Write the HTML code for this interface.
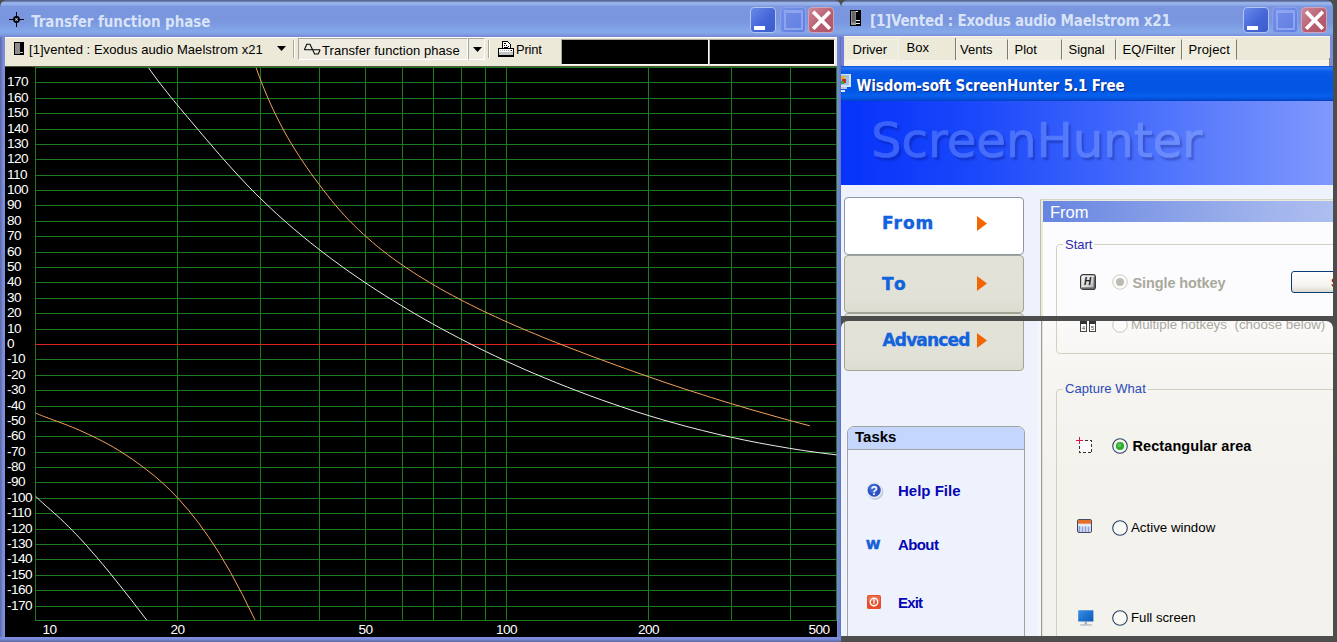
<!DOCTYPE html>
<html><head><meta charset="utf-8"><title>Transfer function phase</title>
<style>
html,body{margin:0;padding:0}
body{width:1337px;height:642px;overflow:hidden;position:relative;background:#4d4d4d;font-family:"Liberation Sans",Arial,sans-serif;font-size:13px;color:#000}
div,span,svg{position:absolute;box-sizing:border-box}
.t{white-space:pre;line-height:1}
/* XP inactive title bar */
.tb{background:linear-gradient(#56648e 0,#62729e 1.3px,#94aee6 2.2px,#9ab4ea 3px,#92aee8 4.5px,#7c98e0 6.5px,#7a96df 8px,#7a96df 22px,#81a4e6 29px,#83a8e8 32px,#80a0e4 34px,#7a8cd8 36px,#7888d4 37px)}
.tt{font-family:"DejaVu Sans Condensed","DejaVu Sans",sans-serif;font-weight:bold;font-size:15px;color:#d9e3f8}
.btn{width:26px;height:26px;top:6.5px;border:1px solid #b4c4f0;border-radius:4px}
.bmin{background:linear-gradient(135deg,#6a8aea 0,#4466d8 55%,#3a5ccc 100%)}
.bmax{background:linear-gradient(135deg,#7690ea 0,#5e7ee0 100%);border-color:#8aa0ea}
.bcls{background:linear-gradient(135deg,#cc8896 0,#b85c70 60%,#b05468 100%);border-color:#d0a4b8}
.tool{background:#ece9d8}
</style></head><body>

<!-- ================= LEFT WINDOW ================= -->
<div class="tb" style="left:0;top:0;width:841px;height:37px;border-radius:7px 7px 0 0"></div>
<svg style="left:9px;top:12px" width="16" height="16" viewBox="0 0 16 16"><path d="M7.5 0v15M0 7.5h15" stroke="#000" stroke-width="1" fill="none" shape-rendering="crispEdges"/><circle cx="7.5" cy="7.5" r="2.6" fill="none" stroke="#000" stroke-width="1.6"/><circle cx="7.5" cy="7.5" r="1" fill="#cfd8f0"/></svg>
<span class="t tt" style="left:31.3px;top:15.2px;letter-spacing:-.07px">Transfer function phase</span>
<div class="btn bmin" style="left:750px"><div style="left:3px;top:18px;width:11px;height:4px;background:#fff"></div></div>
<div class="btn bmax" style="left:779.5px"><div style="left:3px;top:2.5px;width:19px;height:19.5px;border:2px solid #8ea4ee;border-top-width:3px"></div></div>
<div class="btn bcls" style="left:808px"><svg style="left:0;top:0" width="24" height="24" viewBox="0 0 24 24"><path d="M4.2 3.8L20.8 20.8M20.8 3.8L4.2 20.8" stroke="#fff" stroke-width="3.7" fill="none"/></svg></div>

<div style="left:0;top:37px;width:5px;height:605px;background:linear-gradient(90deg,#5e6aa8 0,#6a78bc 1.5px,#7c8cdc 3px,#7e8ede 5px)"></div>
<div style="left:837px;top:37px;width:4px;height:605px;background:linear-gradient(90deg,#7a8ad8 0,#6c7cc8 3px,#5c6cae 4px)"></div>
<div style="left:0;top:637px;width:841px;height:5px;background:linear-gradient(#7e8ede 0,#7c8cdc 2px,#6a78bc 3.5px,#5e6aa8 5px)"></div>

<!-- toolbar -->
<div class="tool" style="left:5px;top:37px;width:832px;height:29px;border-top:1px solid #fff"></div>
<svg style="left:14px;top:42px" width="10" height="13" viewBox="0 0 10 13" shape-rendering="crispEdges"><rect x="0" y="0" width="10" height="13" fill="#000"/><rect x="1" y="1" width="5" height="11" fill="#8c8c8c"/><rect x="6" y="10" width="3" height="1" fill="#c8c8c8"/></svg>
<span class="t" style="left:29px;top:43px;letter-spacing:.05px">[1]vented : Exodus audio Maelstrom x21</span>
<svg style="left:277px;top:46px" width="9" height="5" viewBox="0 0 9 5"><path d="M0 0h9L4.5 5z" fill="#000"/></svg>
<div style="left:293px;top:40px;width:2px;height:18px;border-left:1px solid #aca899;border-right:1px solid #fff"></div>
<div style="left:298px;top:38px;width:170px;height:22px;background:#efede1;border:1px solid;border-color:#aca899 #fff #fff #aca899"></div>
<div style="left:468px;top:38px;width:17px;height:22px;background:#efede1;border:1px solid;border-color:#aca899 #fff #fff #aca899"></div>
<svg style="left:304px;top:43px" width="17" height="13" viewBox="0 0 17 13"><path d="M0.3 6.8H16.2M0.3 6.8L2.8 1.3H6L10.6 11H14.2L16.2 6.8" fill="none" stroke="#000" stroke-width="1.05"/></svg>
<span class="t" style="left:322px;top:44px;letter-spacing:.07px">Transfer function phase</span>
<svg style="left:473px;top:47px" width="9" height="5" viewBox="0 0 9 5"><path d="M0 0h9L4.5 5z" fill="#000"/></svg>
<div style="left:488px;top:40px;width:2px;height:18px;border-left:1px solid #aca899;border-right:1px solid #fff"></div>
<svg style="left:498px;top:41px" width="16" height="16" viewBox="0 0 16 16" shape-rendering="crispEdges"><path d="M4.5 8V0.5H9.5L12.5 3.5V8" fill="#fff" stroke="#000"/><path d="M6 2.5h2M6 4.5h1M8 4.5h1M6 6.5h4M10 5.5h1" stroke="#000"/><rect x="0.5" y="7.5" width="15" height="7" fill="#c4c4c4" stroke="#000"/><rect x="1" y="8" width="14" height="3" fill="#fff"/><path d="M2 9.5h1M4 9.5h1M6 9.5h1M8 9.5h1M10 9.5h1M12 9.5h1" stroke="#aaa"/><rect x="13" y="9" width="1" height="1" fill="#000"/><rect x="0" y="14" width="16" height="1.6" fill="#000"/></svg>
<span class="t" style="left:516px;top:43px;letter-spacing:-.2px">Print</span>
<div style="left:561px;top:39px;width:148px;height:26px;background:#000;border:1px solid;border-color:#aca899 #fff #fff #aca899"></div>
<div style="left:709px;top:39px;width:126px;height:26px;background:#000;border:1px solid;border-color:#aca899 #fff #fff #aca899"></div>

<!-- plot -->
<div style="left:5px;top:66px;width:832px;height:571px;background:#000">
<svg class="plot" width="832" height="571" viewBox="5 66 832 571">
<rect x="5" y="66" width="832" height="571" fill="#000"/><rect x="5" y="66" width="832" height="1" fill="#50583c"/>
<g fill="#1e7a1e" shape-rendering="crispEdges"><rect x="35" y="606" width="802" height="1"/><rect x="35" y="590" width="802" height="1"/><rect x="35" y="575" width="802" height="1"/><rect x="35" y="559" width="802" height="1"/><rect x="35" y="544" width="802" height="1"/><rect x="35" y="529" width="802" height="1"/><rect x="35" y="513" width="802" height="1"/><rect x="35" y="498" width="802" height="1"/><rect x="35" y="482" width="802" height="1"/><rect x="35" y="467" width="802" height="1"/><rect x="35" y="452" width="802" height="1"/><rect x="35" y="436" width="802" height="1"/><rect x="35" y="421" width="802" height="1"/><rect x="35" y="406" width="802" height="1"/><rect x="35" y="390" width="802" height="1"/><rect x="35" y="375" width="802" height="1"/><rect x="35" y="359" width="802" height="1"/><rect x="35" y="329" width="802" height="1"/><rect x="35" y="313" width="802" height="1"/><rect x="35" y="298" width="802" height="1"/><rect x="35" y="282" width="802" height="1"/><rect x="35" y="267" width="802" height="1"/><rect x="35" y="252" width="802" height="1"/><rect x="35" y="236" width="802" height="1"/><rect x="35" y="221" width="802" height="1"/><rect x="35" y="205" width="802" height="1"/><rect x="35" y="190" width="802" height="1"/><rect x="35" y="175" width="802" height="1"/><rect x="35" y="159" width="802" height="1"/><rect x="35" y="144" width="802" height="1"/><rect x="35" y="129" width="802" height="1"/><rect x="35" y="113" width="802" height="1"/><rect x="35" y="98" width="802" height="1"/><rect x="35" y="82" width="802" height="1"/><rect x="35" y="67" width="1" height="553"/><rect x="177" y="67" width="1" height="553"/><rect x="260" y="67" width="1" height="553"/><rect x="319" y="67" width="1" height="553"/><rect x="365" y="67" width="1" height="553"/><rect x="402" y="67" width="1" height="553"/><rect x="433" y="67" width="1" height="553"/><rect x="461" y="67" width="1" height="553"/><rect x="485" y="67" width="1" height="553"/><rect x="506" y="67" width="1" height="553"/><rect x="648" y="67" width="1" height="553"/><rect x="731" y="67" width="1" height="553"/><rect x="790" y="67" width="1" height="553"/><rect x="836" y="67" width="1" height="553"/><rect x="35" y="67" width="802" height="1"/><rect x="35" y="620" width="802" height="1"/></g>
<rect x="35" y="344" width="802" height="1" fill="#dc221a" shape-rendering="crispEdges"/>
<path d="M148.6,67.8 L151.5,71.9 L154.5,76.0 L157.5,80.1 L160.6,84.1 L163.8,88.2 L167.0,92.2 L170.2,96.3 L173.6,100.4 L177.0,104.6 L180.4,108.7 L184.0,113.0 L187.6,117.2 L191.3,121.6 L195.0,126.0 L198.8,130.5 L202.7,135.1 L206.7,139.8 L210.8,144.5 L214.9,149.4 L219.1,154.2 L223.4,159.1 L227.8,164.1 L232.3,169.0 L236.8,174.0 L241.5,179.0 L246.2,184.0 L251.0,189.0 L255.9,194.0 L261.0,198.9 L266.1,203.9 L271.3,208.8 L276.6,213.7 L282.0,218.6 L287.6,223.5 L293.2,228.4 L299.0,233.2 L304.8,238.1 L310.8,242.9 L316.9,247.7 L323.1,252.5 L329.4,257.3 L335.9,262.1 L342.5,266.9 L349.2,271.7 L356.0,276.4 L363.0,281.2 L370.1,285.9 L377.4,290.7 L384.8,295.4 L392.4,300.1 L400.0,304.8 L407.9,309.6 L415.9,314.3 L424.0,319.0 L432.4,323.7 L440.8,328.4 L449.5,333.0 L458.3,337.7 L467.3,342.3 L476.4,346.9 L485.8,351.5 L495.3,356.1 L505.0,360.6 L514.9,365.1 L525.0,369.6 L535.3,374.0 L545.8,378.4 L556.5,382.8 L567.4,387.1 L578.5,391.4 L589.9,395.7 L601.5,399.9 L613.3,404.0 L625.3,408.1 L637.5,412.1 L650.0,416.0 L662.8,419.8 L675.8,423.5 L689.0,427.1 L702.5,430.5 L716.3,433.9 L730.4,437.1 L744.7,440.1 L759.3,443.0 L774.2,445.7 L789.4,448.3 L804.8,450.7 L820.6,452.9 L836.7,454.9 M35.6,496.3 L37.8,498.4 L40.1,500.6 L42.5,502.8 L45.1,505.1 L47.8,507.5 L50.7,510.0 L53.8,512.8 L57.1,515.7 L60.6,518.9 L64.2,522.4 L68.1,526.2 L72.3,530.4 L76.7,534.9 L81.4,539.9 L86.3,545.3 L91.5,551.3 L97.1,557.7 L103.0,564.7 L109.3,572.3 L115.9,580.5 L123.0,589.4 L130.5,598.9 L138.4,609.2 L146.8,620.2" fill="none" stroke="#ecece4" stroke-width="1"/>
<path d="M256.1,67.8 L259.4,76.9 L262.8,85.7 L266.2,94.0 L269.7,102.0 L273.2,109.7 L276.8,117.0 L280.4,124.1 L284.0,130.9 L287.7,137.5 L291.5,143.9 L295.3,150.0 L299.1,156.0 L303.0,161.9 L306.9,167.6 L310.9,173.3 L315.0,178.9 L319.1,184.4 L323.2,189.9 L327.5,195.3 L331.7,200.7 L336.0,205.9 L340.4,210.9 L344.8,215.8 L349.3,220.6 L353.9,225.2 L358.5,229.7 L363.2,234.0 L367.9,238.3 L372.7,242.4 L377.5,246.5 L382.4,250.4 L387.4,254.3 L392.5,258.1 L397.6,261.8 L402.8,265.4 L408.0,268.9 L413.3,272.4 L418.7,275.9 L424.2,279.2 L429.7,282.6 L435.3,285.8 L440.9,289.1 L446.7,292.3 L452.5,295.4 L458.4,298.6 L464.4,301.7 L470.4,304.7 L476.5,307.8 L482.7,310.8 L489.0,313.8 L495.4,316.7 L501.8,319.7 L508.4,322.6 L515.0,325.5 L521.7,328.4 L528.5,331.3 L535.4,334.1 L542.3,337.0 L549.4,339.8 L556.5,342.7 L563.8,345.5 L571.1,348.4 L578.6,351.2 L586.1,354.1 L593.7,357.0 L601.5,359.8 L609.3,362.7 L617.2,365.6 L625.3,368.5 L633.4,371.4 L641.7,374.3 L650.0,377.2 L658.5,380.2 L667.0,383.1 L675.7,386.0 L684.5,388.9 L693.4,391.8 L702.5,394.7 L711.6,397.6 L720.9,400.5 L730.3,403.4 L739.8,406.2 L749.4,409.1 L759.2,411.9 L769.1,414.7 L779.1,417.5 L789.2,420.3 L799.5,423.1 L809.9,425.8 M35.6,412.9 L37.4,413.8 L39.4,414.7 L41.4,415.5 L43.6,416.4 L45.8,417.2 L48.2,418.1 L50.7,419.0 L53.3,420.0 L56.1,421.0 L59.0,422.0 L62.0,423.2 L65.2,424.4 L68.6,425.7 L72.2,427.2 L75.9,428.7 L79.8,430.4 L84.0,432.3 L88.3,434.3 L92.9,436.4 L97.7,438.8 L102.8,441.4 L108.1,444.2 L113.7,447.4 L119.6,450.9 L125.8,454.9 L132.3,459.2 L139.1,464.1 L146.3,469.5 L153.9,475.5 L161.9,482.4 L170.3,490.3 L179.1,499.5 L188.4,510.1 L198.1,522.3 L208.4,536.6 L219.2,553.1 L230.5,572.3 L242.4,594.5 L255.0,620.0" fill="none" stroke="#f2a25e" stroke-width="1"/>
<g fill="#fff" font-family="Liberation Sans, Arial, sans-serif" font-size="13.6" letter-spacing="-0.56"><text x="7" y="609.6">-170</text><text x="7" y="593.6">-160</text><text x="7" y="578.6">-150</text><text x="7" y="562.6">-140</text><text x="7" y="547.6">-130</text><text x="7" y="532.6">-120</text><text x="7" y="516.6">-110</text><text x="7" y="501.6">-100</text><text x="7" y="485.6">-90</text><text x="7" y="470.6">-80</text><text x="7" y="455.6">-70</text><text x="7" y="439.6">-60</text><text x="7" y="424.6">-50</text><text x="7" y="409.6">-40</text><text x="7" y="393.6">-30</text><text x="7" y="378.6">-20</text><text x="7" y="362.6">-10</text><text x="7" y="347.6">0</text><text x="7" y="332.6">10</text><text x="7" y="316.6">20</text><text x="7" y="301.6">30</text><text x="7" y="285.6">40</text><text x="7" y="270.6">50</text><text x="7" y="255.6">60</text><text x="7" y="239.6">70</text><text x="7" y="224.6">80</text><text x="7" y="208.6">90</text><text x="7" y="193.6">100</text><text x="7" y="178.6">110</text><text x="7" y="162.6">120</text><text x="7" y="147.6">130</text><text x="7" y="132.6">140</text><text x="7" y="116.6">150</text><text x="7" y="101.6">160</text><text x="7" y="85.6">170</text><text x="42.5" y="634">10</text><text x="177.5" y="634" text-anchor="middle">20</text><text x="365.5" y="634" text-anchor="middle">50</text><text x="506.5" y="634" text-anchor="middle">100</text><text x="648.5" y="634" text-anchor="middle">200</text><text x="829.5" y="634" text-anchor="end">500</text></g>
</svg>
</div>

<!-- ================= RIGHT WINDOW (Vented) ================= -->
<div class="tb" style="left:841px;top:0;width:492px;height:37px;border-radius:7px 7px 0 0"></div>
<svg style="left:850px;top:10px" width="11" height="16" viewBox="0 0 12 16" preserveAspectRatio="none" shape-rendering="crispEdges"><rect width="12" height="16" fill="#000"/><rect x="1" y="1" width="6" height="14" fill="#9a9a9a"/><path d="M2 2h1M4 2h1M3 3h1M5 3h1M2 4h1M4 4h1M3 5h1M5 5h1M2 6h1M4 6h1M3 7h1M5 7h1M2 8h1M4 8h1M3 9h1M5 9h1M2 10h1M4 10h1M3 11h1M5 11h1M2 12h1M4 12h1" stroke="#222"/><rect x="7" y="10" width="4" height="1" fill="#eee"/><rect x="7" y="13" width="4" height="1" fill="#eee"/><rect x="7" y="1" width="2" height="1" fill="#eee"/></svg>
<span class="t tt" style="left:870px;top:14.2px;letter-spacing:-.23px">[1]Vented : Exodus audio Maelstrom x21</span>
<div class="btn bmin" style="left:1243px"><div style="left:3px;top:18px;width:11px;height:4px;background:#fff"></div></div>
<div class="btn bmax" style="left:1272.2px"><div style="left:3px;top:2.5px;width:19px;height:19.5px;border:2px solid #8ea4ee;border-top-width:3px"></div></div>
<div class="btn bcls" style="left:1301.2px"><svg style="left:0;top:0" width="24" height="24" viewBox="0 0 24 24"><path d="M4.2 3.8L20.8 20.8M20.8 3.8L4.2 20.8" stroke="#fff" stroke-width="3.7" fill="none"/></svg></div>
<div style="left:841px;top:37px;width:3px;height:29px;background:#747cdc"></div>
<div style="left:1330px;top:37px;width:3px;height:29px;background:#7c8cdc"></div>
<div class="tool" style="left:844px;top:36px;width:486px;height:30px;border-top:1px solid #f8f6ee"></div>
<div style="left:844px;top:60px;width:486px;height:6px;background:#f5f3e9"></div>
<div style="left:1329px;top:58px;width:1px;height:8px;background:#8a8878"></div>
<div style="left:846px;top:38.5px;width:52.5px;height:21.5px;background:#edebdc;border:1.5px solid #f4f2e7"></div>
<span class="t" style="left:852.5px;top:43px;letter-spacing:0">Driver</span>
<div style="left:898px;top:38px;width:58px;height:22px;border-right:1.5px solid #7e7c69"></div>
<span class="t" style="left:906.5px;top:41px">Box</span>
<div style="left:956px;top:39px;width:52px;height:21px;background:#efeddf;border:1px solid;border-color:#f6f5ec #7e7c69 #f1efe3 #f6f5ec;border-right-width:1.5px"></div>
<span class="t" style="left:960px;top:43px;letter-spacing:0">Vents</span>
<div style="left:1008px;top:39px;width:54px;height:21px;background:#efeddf;border:1px solid;border-color:#f6f5ec #7e7c69 #f1efe3 #f6f5ec;border-right-width:1.5px"></div>
<span class="t" style="left:1014.5px;top:43px;letter-spacing:0">Plot</span>
<div style="left:1062px;top:39px;width:54px;height:21px;background:#efeddf;border:1px solid;border-color:#f6f5ec #7e7c69 #f1efe3 #f6f5ec;border-right-width:1.5px"></div>
<span class="t" style="left:1068.5px;top:43px;letter-spacing:0">Signal</span>
<div style="left:1116px;top:39px;width:66px;height:21px;background:#efeddf;border:1px solid;border-color:#f6f5ec #7e7c69 #f1efe3 #f6f5ec;border-right-width:1.5px"></div>
<span class="t" style="left:1122.4px;top:43px;letter-spacing:.22px">EQ/Filter</span>
<div style="left:1182px;top:39px;width:55px;height:21px;background:#efeddf;border:1px solid;border-color:#f6f5ec #7e7c69 #f1efe3 #f6f5ec;border-right-width:1.5px"></div>
<span class="t" style="left:1188.4px;top:43px;letter-spacing:.16px">Project</span>

<!-- ================= ScreenHunter ================= -->
<div style="left:841px;top:66px;width:492px;height:570px;background:#eef2fc"></div>
<div style="left:841px;top:66px;width:492px;height:35px;background:linear-gradient(#0a50d8 0,#2a78f4 2px,#0c5ee8 5px,#0456e4 9px,#0355e3 24px,#0660ee 30px,#0452dc 33px,#0340c0 35px)"></div>
<svg style="left:841px;top:74px" width="11" height="19" viewBox="0 0 11 19"><rect x="0" y="0" width="10" height="13" fill="#d8e4f4"/><rect x="0" y="1" width="8" height="10" fill="#9cc0e8"/><rect x="0" y="2" width="4" height="3" fill="#e8b030"/><rect x="1" y="5" width="4" height="4" fill="#c03020"/><rect x="0" y="7" width="3" height="3" fill="#40a040"/><rect x="0" y="13" width="6" height="2" fill="#b8c8e0"/><rect x="0" y="16" width="4" height="2" fill="#e0e8f4"/></svg>
<span class="t" style="left:856.5px;top:79px;font-family:'DejaVu Sans Condensed','DejaVu Sans',sans-serif;font-weight:bold;font-size:15px;color:#fff;letter-spacing:-.12px;text-shadow:1px 1px 1px #0a2a88">Wisdom-soft ScreenHunter 5.1 Free</span>
<div style="left:841px;top:101px;width:492px;height:84px;background:linear-gradient(90deg,#0632fa 0,#1846fa 25%,#3860fb 50%,#5c7efc 75%,#8199fd 100%)"></div>
<div style="left:841px;top:101px;width:492px;height:84px;opacity:.27;overflow:hidden"><span class="t" style="left:30px;top:15px;font-family:'DejaVu Sans',sans-serif;font-size:48.3px;letter-spacing:-.1px;color:#b4ccff;-webkit-text-stroke:.7px #b4ccff;text-shadow:2.5px 2.5px 2px #00065a">ScreenHunter</span></div>
<div style="left:844px;top:197px;width:180px;height:58px;background:#fff;border:1px solid #8c98a8;border-radius:4px"></div>
<span class="t" style="left:882px;top:215.3px;font-family:'DejaVu Sans',sans-serif;font-weight:bold;font-size:17px;color:#1262dc;-webkit-text-stroke:.45px #1262dc;letter-spacing:1px">From</span>
<svg style="left:976.7px;top:215.5px" width="10" height="15" viewBox="0 0 10 16" preserveAspectRatio="none"><path d="M0 0L10 8L0 16z" fill="#f26500"/></svg>
<div style="left:844px;top:255px;width:180px;height:58px;background:linear-gradient(#e3e2d9,#e2e1d8 75%,#dddcd0);border:1px solid #a4a496;border-radius:4px"></div>
<span class="t" style="left:882px;top:275.6px;font-family:'DejaVu Sans',sans-serif;font-weight:bold;font-size:17px;color:#1262dc;-webkit-text-stroke:.45px #1262dc;letter-spacing:2.6px">To</span>
<svg style="left:976.7px;top:275.7px" width="10" height="15" viewBox="0 0 10 16" preserveAspectRatio="none"><path d="M0 0L10 8L0 16z" fill="#f26500"/></svg>
<div style="left:844px;top:313px;width:180px;height:58px;background:linear-gradient(#e3e2d9,#e2e1d8 75%,#dddcd0);border:1px solid #a4a496;border-radius:4px"></div>
<span class="t" style="left:882.5px;top:332.2px;font-family:'DejaVu Sans',sans-serif;font-weight:bold;font-size:17px;color:#1262dc;-webkit-text-stroke:.4px #1262dc;letter-spacing:-.85px">Advanced</span>
<svg style="left:976.7px;top:333.3px" width="10" height="15" viewBox="0 0 10 16" preserveAspectRatio="none"><path d="M0 0L10 8L0 16z" fill="#f26500"/></svg>
<div style="left:847px;top:426px;width:178px;height:220px;background:#eef2fc;border:1px solid #a2a2a2;border-radius:7px 7px 0 0"></div>
<div style="left:848px;top:427px;width:176px;height:23px;background:#c5d6fc;border-bottom:1px solid #a2a2a2;border-radius:6px 6px 0 0"></div>
<span class="t" style="left:855px;top:429px;font-weight:bold;font-size:15px">Tasks</span>
<svg style="left:864.5px;top:481px" width="19.5" height="19.5" viewBox="0 0 18 18"><circle cx="9.5" cy="10" r="7.5" fill="#c8ccd8"/><circle cx="8.5" cy="8.5" r="7.5" fill="#e4e8f4"/><circle cx="8.5" cy="8.5" r="6" fill="#2a50c0"/><circle cx="7.5" cy="7" r="4" fill="#4a74e0" opacity=".7"/><text x="8.5" y="12.5" text-anchor="middle" font-family="Liberation Sans,sans-serif" font-weight="bold" font-size="11" fill="#fff">?</text></svg>
<span class="t" style="left:898px;top:483px;font-weight:bold;font-size:15px;color:#0606b4">Help File</span>
<span class="t" style="left:866px;top:538px;font-family:'DejaVu Sans',sans-serif;font-weight:bold;font-size:13px;color:#1460d8;-webkit-text-stroke:.6px #1460d8">W</span>
<span class="t" style="left:898px;top:537px;font-weight:bold;font-size:15px;color:#0606b4;letter-spacing:-.6px">About</span>
<svg style="left:866.5px;top:595px" width="14" height="14" viewBox="0 0 15 15"><rect x="0" y="0" width="15" height="15" rx="2" fill="#e4502c"/><rect x="1" y="1" width="13" height="6" rx="1.5" fill="#f07858" opacity=".7"/><circle cx="7.5" cy="7.5" r="4" fill="none" stroke="#fff" stroke-width="1.5"/><rect x="6.8" y="4.5" width="1.4" height="5" fill="#fff"/></svg>
<span class="t" style="left:898px;top:595px;font-weight:bold;font-size:15px;color:#0606b4;letter-spacing:-.8px">Exit</span>
<div style="left:1040px;top:199px;width:293px;height:437px;background:#eceadc;border-left:1px solid #bdbcad;border-top:1px solid #d4d3c4"></div>
<div style="left:1043px;top:201px;width:290px;height:116px;background:#fcfcfe"></div>
<div style="left:1043px;top:317px;width:290px;height:319px;background:linear-gradient(#fbfaf9 0,#f6f5f1 60px,#f3f2ed 150px)"></div>
<div style="left:1043px;top:201px;width:290px;height:21px;background:linear-gradient(90deg,#6685e1 0,#829be6 35%,#a2b5ed 80%,#adbef0 100%)"></div>
<span class="t" style="left:1050px;top:204px;font-size:16.5px;color:#fff">From</span>
<div style="left:1056px;top:244px;width:300px;height:110px;border:1px solid #d2d1c0;border-radius:4px"></div>
<span class="t" style="left:1063px;top:238px;padding:0 2px;background:#fcfcfe;color:#2a2aa6">Start</span>
<svg style="left:1080px;top:274px" width="16" height="16" viewBox="0 0 16 16"><defs><linearGradient id="kg" x1="0" y1="0" x2="1" y2="1"><stop offset="0" stop-color="#fbfbfb"/><stop offset=".55" stop-color="#dcdcdc"/><stop offset="1" stop-color="#9c9c9c"/></linearGradient></defs><rect x="0.6" y="0.6" width="14.8" height="14.8" rx="2.5" fill="url(#kg)" stroke="#3a3a3a" stroke-width="1.2"/><path d="M2 14.2H14.2V3" fill="none" stroke="#555" stroke-width="1.2"/><text x="7.6" y="11.4" text-anchor="middle" font-family="Liberation Sans,sans-serif" font-weight="bold" font-style="italic" font-size="10" fill="#222">H</text></svg>
<svg style="left:1111.5px;top:273.8px" width="16" height="16" viewBox="0 0 16 16"><circle cx="8" cy="8" r="7.3" fill="#fbfbf9" stroke="#ccccc4" stroke-width="1"/><circle cx="8" cy="8" r="4" fill="#bcbcb4"/></svg>
<span class="t" style="left:1132.5px;top:275.6px;font-weight:bold;font-size:14.5px;color:#a9a99b;letter-spacing:-.1px">Single hotkey</span>
<div style="left:1291px;top:271px;width:60px;height:22px;border:1px solid #0b3c78;border-radius:3px;background:linear-gradient(#fff,#f4f3ee 70%,#dcd9cc)"></div>
<div style="left:1320px;top:272px;width:13px;height:20px;overflow:hidden"><span class="t" style="left:11px;top:4px;font-weight:bold;color:#a81414">Set</span></div>
<svg style="left:1080px;top:321px" width="17" height="11" viewBox="0 0 17 11" shape-rendering="crispEdges"><rect x="0.5" y="0.5" width="6" height="10" fill="#fcfcfc" stroke="#444"/><rect x="9.5" y="0.5" width="6" height="10" fill="#fcfcfc" stroke="#444"/><rect x="0" y="0" width="7" height="3" fill="#333"/><rect x="9" y="0" width="7" height="3" fill="#333"/><text x="3.6" y="9" text-anchor="middle" font-family="Liberation Sans,sans-serif" font-size="5.5" fill="#333">4</text><text x="12.6" y="9" text-anchor="middle" font-family="Liberation Sans,sans-serif" font-size="5.5" fill="#333">5</text></svg>
<svg style="left:1111.5px;top:316.5px" width="16" height="16" viewBox="0 0 16 16"><circle cx="8" cy="8" r="7.3" fill="#fbfbf9" stroke="#c8c8c0" stroke-width="1"/></svg>
<span class="t" style="left:1131px;top:318px;font-size:13.4px;color:#a9a9a0">Multiple hotkeys  (choose below)</span>
<div style="left:1056px;top:389px;width:300px;height:300px;border:1px solid #d2d1c0;border-radius:4px"></div>
<span class="t" style="left:1063px;top:382px;padding:0 2px;background:#f4f3ee;color:#2c4ab8;letter-spacing:.05px">Capture What</span>
<svg style="left:1076px;top:437px" width="18" height="18" viewBox="0 0 18 18" shape-rendering="crispEdges"><rect x="3.5" y="3.5" width="12" height="12" fill="#fbfbfb" stroke="#333" stroke-dasharray="3 2"/><path d="M3.5 0v7M0 3.5h7" stroke="#d01848" fill="none"/></svg>
<svg style="left:1112px;top:437.5px" width="16" height="16" viewBox="0 0 16 16"><circle cx="8" cy="8" r="7.3" fill="#f4f4f0" stroke="#2c4264" stroke-width="1.1"/><circle cx="8" cy="8" r="4.1" fill="#2cab2c"/><circle cx="7.4" cy="7.2" r="2" fill="#58c858"/></svg>
<span class="t" style="left:1132.5px;top:439px;font-weight:bold;font-size:14.5px;color:#000;letter-spacing:.08px">Rectangular area</span>
<svg style="left:1077px;top:519px" width="15" height="14" viewBox="0 0 15 14"><rect x="0.5" y="0.5" width="14" height="13" rx="1.5" fill="#c4d0ee" stroke="#454c60"/><path d="M1 5V2.2Q1 1 2.2 1H12.8Q14 1 14 2.2V5z" fill="#e4702c"/><rect x="1" y="4.2" width="13" height="1" fill="#f0a070"/><rect x="1" y="5.2" width="13" height="2" fill="#e8eefa"/><path d="M2.5 7v6M5.5 8v5M8.5 7.5v5.5M11.5 8v5" stroke="#8a9ed8" stroke-width="1.6"/><path d="M4 7v6M7 7v6M10 7v6M13 7v6" stroke="#dfe6f6" stroke-width="1"/></svg>
<svg style="left:1112px;top:519.7px" width="16" height="16" viewBox="0 0 16 16"><circle cx="8" cy="8" r="7.3" fill="#f8f8f5" stroke="#2c4264" stroke-width="1.1"/></svg>
<span class="t" style="left:1131px;top:521px;font-size:13.3px">Active window</span>
<svg style="left:1078px;top:610px" width="17" height="17" viewBox="0 0 17 17"><defs><linearGradient id="mg" x1="0" y1="0" x2="1" y2="1"><stop offset="0" stop-color="#3a90e4"/><stop offset=".5" stop-color="#1f74d0"/><stop offset="1" stop-color="#1258b4"/></linearGradient></defs><rect x="0.2" y="0.2" width="15.2" height="11.3" rx=".6" fill="url(#mg)"/><rect x="6.8" y="11.5" width="2" height="3" fill="#8fa4b8"/><rect x="2.2" y="14.4" width="11.6" height="1.1" fill="#a4b0bc"/></svg>
<svg style="left:1112px;top:610px" width="16" height="16" viewBox="0 0 16 16"><circle cx="8" cy="8" r="7.3" fill="#f8f8f5" stroke="#2c4264" stroke-width="1.1"/></svg>
<span class="t" style="left:1131px;top:611px;font-size:13.2px">Full screen</span>
<div style="left:1037px;top:321px;width:4px;height:315px;background:linear-gradient(90deg,#f2f5fc,#f8f8fb)"></div><div style="left:1041px;top:321px;width:1px;height:315px;background:#9a9a90"></div><div style="left:1042px;top:321px;width:1px;height:315px;background:#e4e3da"></div>
<!-- capture frame artefacts -->
<div style="left:841px;top:316px;width:496px;height:5px;background:#4d4d4d"></div>
<svg style="left:841px;top:321px" width="7" height="7" viewBox="0 0 7 7"><path d="M0 0H7A7 7 0 0 0 0 7z" fill="#4d4d4d"/></svg>
<svg style="left:1326px;top:321px" width="7" height="7" viewBox="0 0 7 7"><path d="M7 0H0A7 7 0 0 1 7 7z" fill="#4d4d4d"/></svg>
<div style="left:1333px;top:0;width:4px;height:642px;background:#4d4d4d"></div>
<div style="left:841px;top:636px;width:496px;height:6px;background:#4d4d4d"></div>

</body></html>
